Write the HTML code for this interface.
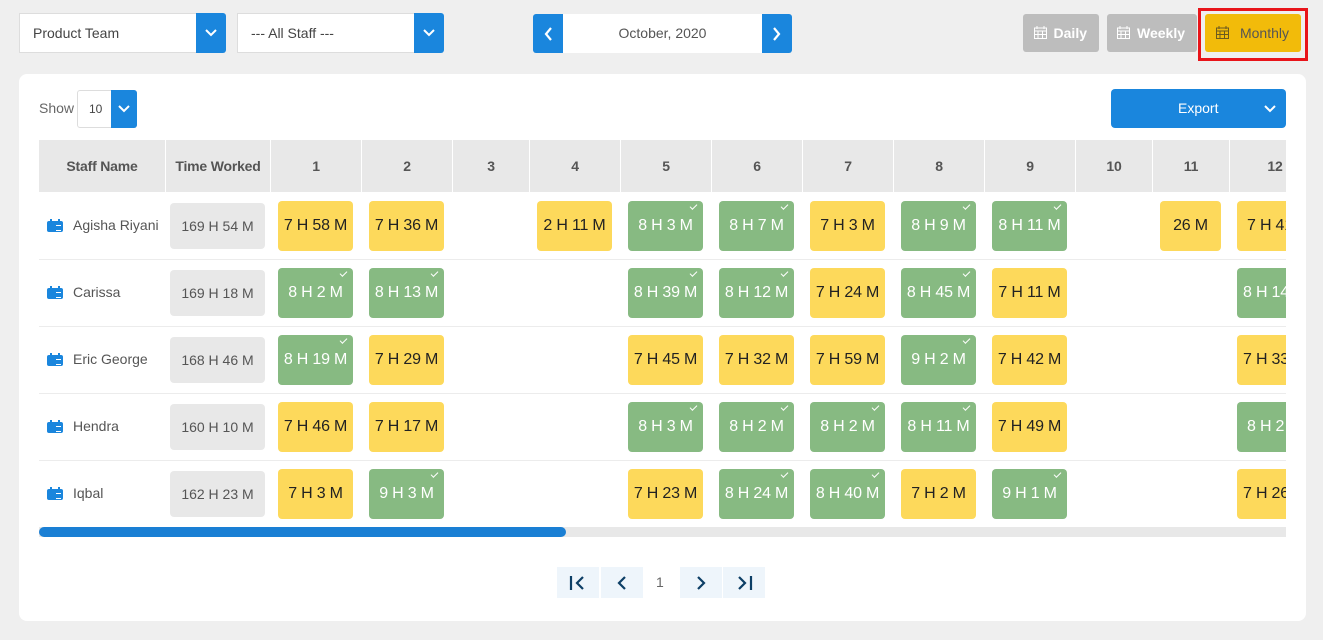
<!DOCTYPE html>
<html><head><meta charset="utf-8"><style>
*{box-sizing:border-box;margin:0;padding:0}
body{width:1323px;height:640px;background:#efefef;font-family:"Liberation Sans",sans-serif;position:relative;overflow:hidden;color:#444}
.a{position:absolute}
.sel{position:absolute;background:#fff;border:1px solid #ddd;font-size:14px;color:#444;padding-left:13px;line-height:38px}
.bb{position:absolute;background:#1a86dd;border-radius:0 3px 3px 0}
.bb svg,.nb svg{position:absolute;left:50%;top:50%;transform:translate(-50%,-50%)}
.nb{position:absolute;background:#1a86dd}
.vb{position:absolute;top:14px;height:38px;border-radius:3px;color:#fff;font-size:14px;font-weight:bold;line-height:38px;text-align:right;padding-right:12px}
.card{position:absolute;left:19px;top:74px;width:1287px;height:547px;background:#fff;border-radius:8px}
.hd{position:absolute;top:140px;height:52px;background:#e8e8e8;font-size:14px;font-weight:bold;color:#555;text-align:center;line-height:52px;letter-spacing:-0.2px}
.sep{position:absolute;left:39px;width:1247px;height:1px;background:#ececec}
.c{position:absolute;height:50px;width:75px;border-radius:4px;font-size:16px;letter-spacing:-0.2px;text-align:center;line-height:50px}
.y{background:#fdd95b;color:#222}
.g{background:#87ba82;color:#fff}
.g::after{content:"";position:absolute;right:6px;top:3px;width:6px;height:3px;border-left:1.3px solid #fff;border-bottom:1.3px solid #fff;transform:rotate(-45deg)}
.t{position:absolute;left:170px;width:95px;height:46px;background:#e8e8e8;border-radius:4px;font-size:14px;color:#555;text-align:center;line-height:46px}
.n{position:absolute;left:73px;font-size:14px;color:#555}
.ic{position:absolute;left:47px;width:16px;height:11px;background:#1a86dd;border-radius:2px}
.ic::before{content:"";position:absolute;left:3px;top:-2px;width:10px;height:3px;border-left:2px solid #1a86dd;border-right:2px solid #1a86dd;box-sizing:border-box}
.ic::after{content:"";position:absolute;left:9px;top:4px;width:5px;height:4px;border-top:1px solid #fff;border-bottom:1px solid #fff}
.pg{position:absolute;top:567px;width:42px;height:31px;background:#eef5fb}
.pg svg{position:absolute;left:50%;top:50%;transform:translate(-50%,-50%)}
</style></head><body>
<div class="sel" style="left:19px;top:13px;width:178px;height:40px">Product Team</div>
<div class="bb" style="left:196px;top:13px;width:30px;height:40px"><svg width="14" height="10"><path d="M2 2l5 5 5-5" stroke="#fff" stroke-width="2" fill="none"/></svg></div>
<div class="sel" style="left:237px;top:13px;width:178px;height:40px">--- All Staff ---</div>
<div class="bb" style="left:414px;top:13px;width:30px;height:40px"><svg width="14" height="10"><path d="M2 2l5 5 5-5" stroke="#fff" stroke-width="2" fill="none"/></svg></div>

<div class="nb" style="left:533px;top:14px;width:30px;height:39px;border-radius:3px 0 0 3px"><svg width="10" height="16"><path d="M8 2L3 8l5 6" stroke="#fff" stroke-width="2.2" fill="none"/></svg></div>
<div class="a" style="left:563px;top:14px;width:199px;height:39px;background:#fff;text-align:center;line-height:39px;font-size:14px;color:#555">October, 2020</div>
<div class="nb" style="left:762px;top:14px;width:30px;height:39px;border-radius:0 3px 3px 0"><svg width="10" height="16"><path d="M2 2l5 6-5 6" stroke="#fff" stroke-width="2.2" fill="none"/></svg></div>

<div class="vb" style="left:1023px;width:76px;background:#bdbdbd">Daily</div>
<svg class="a" style="left:1034px;top:26px" width="13" height="13"><rect x="0.5" y="2" width="12" height="10.5" fill="none" stroke="#fff"/><path d="M0 5h13M3 0v3M10 0v3M4 5v8M8.5 5v8M0 8.5h13" stroke="#fff"/></svg>
<div class="vb" style="left:1107px;width:90px;background:#bdbdbd">Weekly</div>
<svg class="a" style="left:1117px;top:26px" width="13" height="13"><rect x="0.5" y="2" width="12" height="10.5" fill="none" stroke="#fff"/><path d="M0 5h13M3 0v3M10 0v3M4 5v8M8.5 5v8M0 8.5h13" stroke="#fff"/></svg>
<div class="a" style="left:1198px;top:8px;width:110px;height:53px;border:3px solid #e8141a"></div>
<div class="vb" style="left:1205px;width:96px;background:#f2bb0a;color:#555;font-weight:normal">Monthly</div>
<svg class="a" style="left:1216px;top:26px" width="13" height="13"><rect x="0.5" y="2" width="12" height="10.5" fill="none" stroke="#6b5a20"/><path d="M0 5h13M3 0v3M10 0v3M4 5v8M8.5 5v8M0 8.5h13" stroke="#6b5a20"/></svg>

<div class="card"></div>
<div class="a" style="left:39px;top:100px;font-size:14px;color:#666">Show</div>
<div class="a" style="left:77px;top:90px;width:60px;height:38px;border:1px solid #ddd;border-radius:3px;font-size:12px;line-height:36px;padding-left:11px;color:#444">10</div>
<div class="bb" style="left:111px;top:90px;width:26px;height:38px"><svg width="14" height="10"><path d="M2 2l5 5 5-5" stroke="#fff" stroke-width="2" fill="none"/></svg></div>
<div class="a" style="left:1111px;top:89px;width:175px;height:39px;background:#1a86dd;border-radius:4px;color:#fff;font-size:14px;line-height:39px;padding-left:67px">Export</div>
<svg class="a" style="left:1263px;top:104px" width="14" height="10"><path d="M2 2l5 5 5-5" stroke="#fff" stroke-width="2" fill="none"/></svg>

<div class="a" style="left:0;top:0;width:1286px;height:640px;overflow:hidden">
<div class="hd" style="left:39px;width:126px">Staff Name</div>
<div class="hd" style="left:166px;width:104px">Time Worked</div>
<div class="hd" style="left:271px;width:90px">1</div>
<div class="hd" style="left:362px;width:90px">2</div>
<div class="hd" style="left:453px;width:76px">3</div>
<div class="hd" style="left:530px;width:90px">4</div>
<div class="hd" style="left:621px;width:90px">5</div>
<div class="hd" style="left:712px;width:90px">6</div>
<div class="hd" style="left:803px;width:90px">7</div>
<div class="hd" style="left:894px;width:90px">8</div>
<div class="hd" style="left:985px;width:90px">9</div>
<div class="hd" style="left:1076px;width:76px">10</div>
<div class="hd" style="left:1153px;width:76px">11</div>
<div class="hd" style="left:1230px;width:90px">12</div>

<div class="sep" style="top:259px"></div><div class="sep" style="top:326px"></div><div class="sep" style="top:393px"></div><div class="sep" style="top:460px"></div>

<div class="ic" style="top:221px"></div><div class="n" style="top:217px">Agisha Riyani</div><div class="t" style="top:203px">169 H 54 M</div>
<div class="c y" style="left:278px;top:201px">7 H 58 M</div>
<div class="c y" style="left:369px;top:201px">7 H 36 M</div>
<div class="c y" style="left:537px;top:201px">2 H 11 M</div>
<div class="c g" style="left:628px;top:201px">8 H 3 M</div>
<div class="c g" style="left:719px;top:201px">8 H 7 M</div>
<div class="c y" style="left:810px;top:201px">7 H 3 M</div>
<div class="c g" style="left:901px;top:201px">8 H 9 M</div>
<div class="c g" style="left:992px;top:201px">8 H 11 M</div>
<div class="c y" style="left:1160px;top:201px;width:61px">26 M</div>
<div class="c y" style="left:1237px;top:201px;text-align:left;padding-left:10px">7 H 41 M</div>

<div class="ic" style="top:288px"></div><div class="n" style="top:284px">Carissa</div><div class="t" style="top:270px">169 H 18 M</div>
<div class="c g" style="left:278px;top:268px">8 H 2 M</div>
<div class="c g" style="left:369px;top:268px">8 H 13 M</div>
<div class="c g" style="left:628px;top:268px">8 H 39 M</div>
<div class="c g" style="left:719px;top:268px">8 H 12 M</div>
<div class="c y" style="left:810px;top:268px">7 H 24 M</div>
<div class="c g" style="left:901px;top:268px">8 H 45 M</div>
<div class="c y" style="left:992px;top:268px">7 H 11 M</div>
<div class="c g" style="left:1237px;top:268px;text-align:left;padding-left:6px">8 H 14 M</div>

<div class="ic" style="top:355px"></div><div class="n" style="top:351px">Eric George</div><div class="t" style="top:337px">168 H 46 M</div>
<div class="c g" style="left:278px;top:335px">8 H 19 M</div>
<div class="c y" style="left:369px;top:335px">7 H 29 M</div>
<div class="c y" style="left:628px;top:335px">7 H 45 M</div>
<div class="c y" style="left:719px;top:335px">7 H 32 M</div>
<div class="c y" style="left:810px;top:335px">7 H 59 M</div>
<div class="c g" style="left:901px;top:335px">9 H 2 M</div>
<div class="c y" style="left:992px;top:335px">7 H 42 M</div>
<div class="c y" style="left:1237px;top:335px;text-align:left;padding-left:6px">7 H 33 M</div>

<div class="ic" style="top:422px"></div><div class="n" style="top:418px">Hendra</div><div class="t" style="top:404px">160 H 10 M</div>
<div class="c y" style="left:278px;top:402px">7 H 46 M</div>
<div class="c y" style="left:369px;top:402px">7 H 17 M</div>
<div class="c g" style="left:628px;top:402px">8 H 3 M</div>
<div class="c g" style="left:719px;top:402px">8 H 2 M</div>
<div class="c g" style="left:810px;top:402px">8 H 2 M</div>
<div class="c g" style="left:901px;top:402px">8 H 11 M</div>
<div class="c y" style="left:992px;top:402px">7 H 49 M</div>
<div class="c g" style="left:1237px;top:402px;text-align:left;padding-left:10px">8 H 2 M</div>

<div class="ic" style="top:489px"></div><div class="n" style="top:485px">Iqbal</div><div class="t" style="top:471px">162 H 23 M</div>
<div class="c y" style="left:278px;top:469px">7 H 3 M</div>
<div class="c g" style="left:369px;top:469px">9 H 3 M</div>
<div class="c y" style="left:628px;top:469px">7 H 23 M</div>
<div class="c g" style="left:719px;top:469px">8 H 24 M</div>
<div class="c g" style="left:810px;top:469px">8 H 40 M</div>
<div class="c y" style="left:901px;top:469px">7 H 2 M</div>
<div class="c g" style="left:992px;top:469px">9 H 1 M</div>
<div class="c y" style="left:1237px;top:469px;text-align:left;padding-left:6px">7 H 26 M</div>
</div>

<div class="a" style="left:39px;top:527px;width:1247px;height:10px;background:#e8e8e8"></div>
<div class="a" style="left:39px;top:527px;width:527px;height:10px;background:#1a7fd4;border-radius:5px"></div>

<div class="pg" style="left:557px"><svg width="20" height="16"><path d="M3 1v14M15 2L9 8l6 6" stroke="#0d3f66" stroke-width="2.2" fill="none"/></svg></div>
<div class="pg" style="left:601px"><svg width="12" height="16"><path d="M9 2L3 8l6 6" stroke="#0d3f66" stroke-width="2.2" fill="none"/></svg></div>
<div class="a" style="left:656px;top:574px;font-size:14px;color:#666">1</div>
<div class="pg" style="left:680px"><svg width="12" height="16"><path d="M3 2l6 6-6 6" stroke="#0d3f66" stroke-width="2.2" fill="none"/></svg></div>
<div class="pg" style="left:723px"><svg width="20" height="16"><path d="M17 1v14M5 2l6 6-6 6" stroke="#0d3f66" stroke-width="2.2" fill="none"/></svg></div>
</body></html>
